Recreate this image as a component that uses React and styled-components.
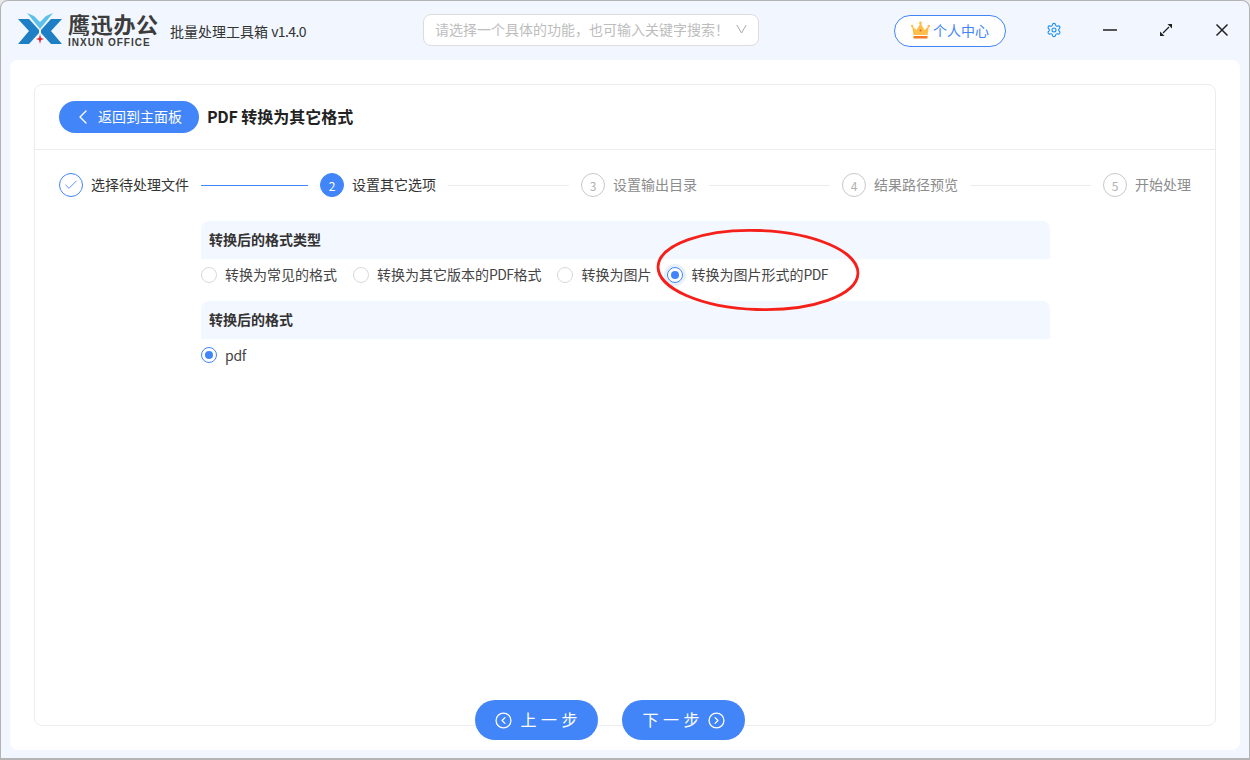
import React from 'react'
import styled, {createGlobalStyle} from 'styled-components'
import {ChevronLeft, Check, Settings} from 'lucide-react'

const blue = '#4285f9'
const font = '"Noto Sans CJK SC", sans-serif'

const Global = createGlobalStyle`
	html, body {
		margin: 0;
		padding: 0;
		background: #e8e8e8;
	}
	* {
		box-sizing: border-box;
	}
`

const Window = styled.div`
	width: 1250px;
	height: 760px;
	display: flex;
	flex-direction: column;
	background: #f2f7ff;
	border: 1px solid #b4b4b4;
	border-bottom-width: 2px;
	border-radius: 8px 8px 0 0;
	font-family: ${font};
	font-size: 14px;
	color: #333;
	overflow: hidden;
`

const TitleBar = styled.header`
	height: 59px;
	flex: none;
	display: flex;
	align-items: center;
	padding: 0 0 2px 17px;
`

const Logo = styled.div`
	display: flex;
	align-items: center;
	gap: 6px;
	width: 152px;
	flex: none;
`

const LogoText = styled.div`
	display: flex;
	flex-direction: column;
	color: #3c3c3c;
	margin-top: 3px;
`

const LogoCn = styled.span`
	font-family: "Liberation Sans", "Noto Sans CJK SC", sans-serif;
	font-size: 22px;
	line-height: 26px;
	font-weight: 700;
	letter-spacing: 0.7px;
	white-space: nowrap;
`

const LogoEn = styled.span`
	font-family: "Liberation Sans", sans-serif;
	font-size: 10px;
	line-height: 12px;
	font-weight: 700;
	letter-spacing: 1px;
	margin-top: -2px;
	white-space: nowrap;
`

const AppName = styled.div`
	width: 253px;
	flex: none;
	color: #333;
	margin-top: 3px;
	padding-bottom: 1px;
	white-space: nowrap;
`

// latin runs in the labels sit a little tighter than the CJK around them
const Latin = styled.span`
	letter-spacing: ${p => p.$tight || '-0.6px'};
`

const Search = styled.div`
	width: 336px;
	height: 32px;
	flex: none;
	display: flex;
	align-items: center;
	justify-content: space-between;
	padding: 0 11px 2px 11px;
	background: #fff;
	border: 1px solid #dcdcdc;
	border-radius: 8px;
	color: #bdbdbd;
	white-space: nowrap;
`

const Profile = styled.button`
	width: 112px;
	height: 32px;
	margin: 2px 0 0 135px;
	flex: none;
	display: flex;
	align-items: center;
	justify-content: center;
	gap: 3px;
	padding: 0 0 2px;
	background: #fff;
	border: 1px solid ${blue};
	border-radius: 16px;
	color: ${blue};
	font-family: ${font};
	font-size: 14px;
`

const WindowButtons = styled.div`
	display: flex;
	align-items: center;
	margin-left: 40px;
	gap: 40px;
`

const IconSlot = styled.span`
	width: 16px;
	height: 16px;
	display: flex;
	align-items: center;
	justify-content: center;
	color: ${p => p.$color || '#222'};
`

const Main = styled.main`
	flex: 1;
	min-height: 0;
	display: flex;
	margin: 0 9px 8px;
	padding: 24px 24px 0;
	background: #fff;
	border-radius: 8px;
`

const Card = styled.section`
	flex: 1;
	display: flex;
	flex-direction: column;
	height: 642px;
	border: 1px solid #ececec;
	border-radius: 8px;
`

const CardHead = styled.div`
	height: 65px;
	flex: none;
	display: flex;
	align-items: center;
	gap: 8px;
	padding: 0 24px;
	border-bottom: 1px solid #ececec;
`

const BackButton = styled.button`
	width: 140px;
	height: 32px;
	display: flex;
	align-items: center;
	gap: 3px;
	padding: 0 0 0 12px;
	background: ${blue};
	border: none;
	border-radius: 16px;
	color: #fff;
	font-family: ${font};
	font-size: 14px;
`

const BackLabel = styled.span`
	padding-bottom: 2px;
`

const PageTitle = styled.h1`
	margin: 0;
	padding-bottom: 3px;
	font-size: 16px;
	font-weight: 700;
	color: #222;
	white-space: nowrap;
`

const Steps = styled.div`
	display: flex;
	align-items: center;
	padding: 23px 24px 0;
`

const Step = styled.div`
	display: flex;
	align-items: center;
	flex: ${p => (p.$last ? 'none' : 1)};
`

const StepDot = styled.span`
	width: 24px;
	height: 24px;
	flex: none;
	display: flex;
	align-items: center;
	justify-content: center;
	border-radius: 50%;
	font-size: 12px;
	border: 1px solid ${p => (p.$state === 'todo' ? '#c8c8c8' : blue)};
	background: ${p => (p.$state === 'active' ? blue : '#fff')};
	color: ${p => (p.$state === 'active' ? '#fff' : p.$state === 'done' ? blue : '#b0b0b0')};
`

const StepLabel = styled.span`
	margin-left: 8px;
	padding-bottom: 2px;
	color: ${p => (p.$state === 'todo' ? '#8c8c8c' : '#333')};
	white-space: nowrap;
`

const StepLine = styled.span`
	flex: 1;
	height: 1px;
	margin: 0 12px;
	background: ${p => (p.$state === 'done' ? blue : '#ececec')};
`

const Options = styled.div`
	position: relative;
	width: 849px;
	margin: 24px 0 0 166px;
`

const SectionTitle = styled.div`
	height: 38px;
	display: flex;
	align-items: center;
	padding: 0 0 2px 8px;
	background: #f3f7ff;
	border-radius: 8px 8px 0 0;
	font-weight: 700;
	color: #333;
`

const RadioRow = styled.div`
	height: 42px;
	display: flex;
	align-items: flex-start;
	padding-top: 8px;
	gap: 16px;
`

const RadioItem = styled.label`
	display: flex;
	align-items: center;
	gap: 8px;
	height: 16px;
	color: #444;
	white-space: nowrap;
`

const RadioText = styled.span`
	padding-bottom: ${p => p.$nudge ?? 2}px;
`

const RadioDot = styled.span`
	width: 16px;
	height: 16px;
	flex: none;
	display: flex;
	align-items: center;
	justify-content: center;
	background: #fff;
	border-radius: 50%;
	border: 1px solid ${p => (p.$on ? blue : '#d9d9d9')};
	box-shadow: ${p => (p.$ring ? '0 0 0 3px #e8f0fe' : 'none')};
	&::after {
		content: '';
		display: ${p => (p.$on ? 'block' : 'none')};
		width: 8px;
		height: 8px;
		border-radius: 50%;
		background: ${blue};
	}
`

const Annotation = styled.svg`
	position: absolute;
	left: 453px;
	top: 6px;
	pointer-events: none;
`

const Footer = styled.div`
	margin-top: auto;
	margin-bottom: -15px;
	display: flex;
	justify-content: center;
	gap: 24px;
	padding-right: 30px;
	position: relative;
`

const NavButton = styled.button`
	width: 123px;
	height: 40px;
	display: flex;
	align-items: center;
	justify-content: center;
	gap: 8px;
	padding: 0;
	background: ${blue};
	border: none;
	border-radius: 20px;
	color: #fff;
	font-family: ${font};
	font-size: 16px;
`

const NavLabel = styled.span`
	letter-spacing: 4.5px;
	margin-right: -4.5px;
	padding-bottom: 2px;
`

const LogoMark = () => (
	<svg width="44" height="33" viewBox="0 0 44 33">
		<polygon points="0,6 11,6 21,17 21,20 11,31 0,31 11,18" fill="#1f7fc4"/>
		<polygon points="44,6 33,6 23,17 23,20 33,31 44,31 33,18" fill="#1f7fc4"/>
		<polygon points="9,0 16,3 22,9 28,3 35,0 22,16" fill="#5cc0ea"/>
		<polygon points="22,21 23,25 26,26 23,27 22,31 21,27 18,26 21,25" fill="#e0242c"/>
	</svg>
)

const Crown = () => (
	<svg width="19" height="18" viewBox="0 0 19 18">
		<polygon points="1,5 5.5,9 9.5,2 13.5,9 18,5 16.5,14 2.5,14" fill="#fbbf4a"/>
		<circle cx="1.2" cy="5" r="1.2" fill="#fbbf4a"/>
		<circle cx="9.5" cy="2" r="1.4" fill="#fbbf4a"/>
		<circle cx="17.8" cy="5" r="1.2" fill="#fbbf4a"/>
		<circle cx="9.5" cy="9.5" r="1" fill="#e8602a"/>
		<rect x="2.5" y="15" width="14" height="2.5" fill="#f47b20"/>
	</svg>
)

const SearchArrow = () => (
	<svg width="11" height="10" viewBox="0 0 11 10">
		<path d="M.8 1l4.7 8 4.7-8" fill="none" stroke="#a8a8a8" strokeWidth="1"/>
	</svg>
)

const Minimize = () => (
	<svg width="16" height="16" viewBox="0 0 16 16">
		<path d="M1 8h14" stroke="#555" strokeWidth="1.8"/>
	</svg>
)

const Maximize = () => (
	<svg width="14" height="14" viewBox="0 0 14 14">
		<path d="M4 10l6-6" stroke="#222" strokeWidth="1.2"/>
		<polygon points="8.5,1 13,1 13,5.5" fill="#222"/>
		<polygon points="1,8.5 1,13 5.5,13" fill="#222"/>
	</svg>
)

const Close = () => (
	<svg width="16" height="16" viewBox="0 0 16 16">
		<path d="M2.5 2.5l11 11M13.5 2.5l-11 11" stroke="#222" strokeWidth="1.5"/>
	</svg>
)

const CircleArrow = ({d}) => (
	<svg width="17" height="17" viewBox="0 0 24 24" fill="none" stroke="currentColor" strokeWidth="1.8" strokeLinecap="round" strokeLinejoin="round">
		<circle cx="12" cy="12" r="10.5"/>
		<path d={d}/>
	</svg>
)

const stepItems = [
	{label: '选择待处理文件', state: 'done'},
	{label: '设置其它选项', state: 'active', n: 2},
	{label: '设置输出目录', state: 'todo', n: 3},
	{label: '结果路径预览', state: 'todo', n: 4},
	{label: '开始处理', state: 'todo', n: 5},
]

const typeOptions = [
	{key: 'common', label: '转换为常见的格式'},
	{key: 'version', label: <>转换为其它版本的<Latin>PDF</Latin>格式</>},
	{key: 'image', label: '转换为图片'},
	{key: 'imagepdf', label: <>转换为图片形式的<Latin>PDF</Latin></>, on: true},
]

const App = () => (
	<Window>
		<Global/>
		<TitleBar>
			<Logo>
				<LogoMark/>
				<LogoText>
					<LogoCn>鹰迅办公</LogoCn>
					<LogoEn>INXUN OFFICE</LogoEn>
				</LogoText>
			</Logo>
			<AppName>批量处理工具箱 <Latin>v1.4.0</Latin></AppName>
			<Search>
				请选择一个具体的功能，也可输入关键字搜索！
				<SearchArrow/>
			</Search>
			<Profile>
				<Crown/>
				个人中心
			</Profile>
			<WindowButtons>
				<IconSlot $color="#1a8cf0"><Settings size={18} strokeWidth={1.6}/></IconSlot>
				<IconSlot><Minimize/></IconSlot>
				<IconSlot><Maximize/></IconSlot>
				<IconSlot><Close/></IconSlot>
			</WindowButtons>
		</TitleBar>
		<Main>
			<Card>
				<CardHead>
					<BackButton>
						<ChevronLeft size={24} strokeWidth={1.4}/>
						<BackLabel>返回到主面板</BackLabel>
					</BackButton>
					<PageTitle><Latin $tight="-0.3px">PDF</Latin> 转换为其它格式</PageTitle>
				</CardHead>
				<Steps>
					{stepItems.map((s, i) => {
						const last = i === stepItems.length - 1
						return (
							<Step key={s.label} $last={last}>
								<StepDot $state={s.state}>
									{s.state === 'done' ? <Check size={16} strokeWidth={1.3}/> : s.n}
								</StepDot>
								<StepLabel $state={s.state}>{s.label}</StepLabel>
								{!last && <StepLine $state={s.state}/>}
							</Step>
						)
					})}
				</Steps>
				<Options>
					<SectionTitle>转换后的格式类型</SectionTitle>
					<RadioRow>
						{typeOptions.map(o => (
							<RadioItem key={o.key}>
								<RadioDot $on={o.on} $ring={o.on}/>
								<RadioText>{o.label}</RadioText>
							</RadioItem>
						))}
					</RadioRow>
					<SectionTitle>转换后的格式</SectionTitle>
					<RadioRow>
						<RadioItem>
							<RadioDot $on/>
							<RadioText $nudge={0}><Latin $tight="-0.3px">pdf</Latin></RadioText>
						</RadioItem>
					</RadioRow>
					<Annotation width="210" height="88" viewBox="0 0 210 88">
						<ellipse cx="104" cy="43" rx="100" ry="39.5" fill="none" stroke="#f5201a" strokeWidth="2.8" transform="rotate(2 104 43)"/>
					</Annotation>
				</Options>
				<Footer>
					<NavButton>
						<CircleArrow d="M14 8l-4 4 4 4"/>
						<NavLabel>上一步</NavLabel>
					</NavButton>
					<NavButton>
						<NavLabel>下一步</NavLabel>
						<CircleArrow d="M10 16l4-4-4-4"/>
					</NavButton>
				</Footer>
			</Card>
		</Main>
	</Window>
)

export default App
